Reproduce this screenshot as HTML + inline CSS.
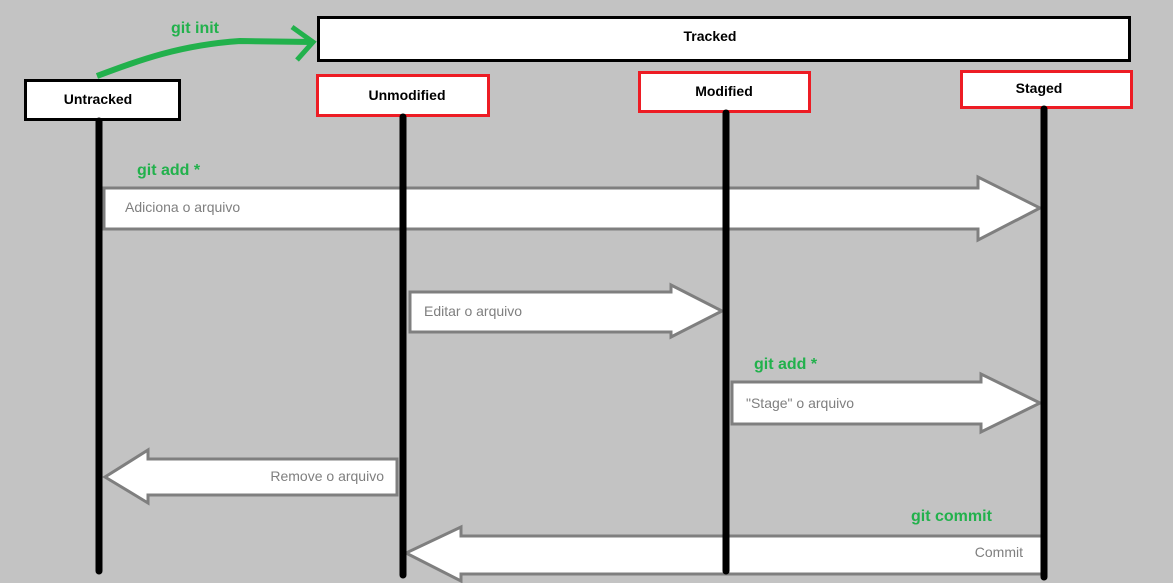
<!DOCTYPE html>
<html><head><meta charset="utf-8"><style>
html,body{margin:0;padding:0;background:#c3c3c3;width:1173px;height:583px;overflow:hidden}
svg{display:block}
.b{font-family:"Liberation Sans",sans-serif;font-weight:bold;font-size:14px;fill:#000}
.g{font-family:"Liberation Sans",sans-serif;font-weight:bold;font-size:16px;fill:#22b14c}
.t{font-family:"Liberation Sans",sans-serif;font-size:14px;fill:#7f7f7f}
</style></head><body>
<svg width="1173" height="583" viewBox="0 0 1173 583" xmlns="http://www.w3.org/2000/svg">
<rect width="1173" height="583" fill="#c3c3c3"/>
<!-- boxes -->
<rect x="318.5" y="17.5" width="811" height="43" fill="#fff" stroke="#000" stroke-width="3"/>
<text x="710" y="41" class="b" text-anchor="middle">Tracked</text>
<rect x="25.5" y="80.5" width="154" height="39" fill="#fff" stroke="#000" stroke-width="3"/>
<text x="98" y="104" class="b" text-anchor="middle">Untracked</text>
<rect x="317.5" y="75.5" width="171" height="40" fill="#fff" stroke="#ed1c24" stroke-width="3"/>
<text x="407" y="100" class="b" text-anchor="middle">Unmodified</text>
<rect x="639.5" y="72.5" width="170" height="39" fill="#fff" stroke="#ed1c24" stroke-width="3"/>
<text x="724" y="96" class="b" text-anchor="middle">Modified</text>
<rect x="961.5" y="71.5" width="170" height="36" fill="#fff" stroke="#ed1c24" stroke-width="3"/>
<text x="1039" y="93" class="b" text-anchor="middle">Staged</text>
<!-- git init arrow -->
<path d="M97 76 C140 60 180 45 240 41 L313 42" fill="none" stroke="#22b14c" stroke-width="6"/>
<path d="M292 27 L313 42 L297 60" fill="none" stroke="#22b14c" stroke-width="5"/>
<text x="171" y="33" class="g">git init</text>
<!-- arrows -->
<g fill="#fff" stroke="#7f7f7f" stroke-width="3" stroke-linejoin="miter">
<path d="M104 188 H978 V177 L1040 208 L978 240 V229 H104 Z"/>
<path d="M410 292 H671 V285 L722 311 L671 337 V332 H410 Z"/>
<path d="M732 382 H981 V374 L1040 403 L981 432 V424 H732 Z"/>
<path d="M397 459 H148 V450 L105 477 L148 503 V495 H397 Z"/>
<path d="M1042 536 H461 V527 L406 553 L461 581 V574 H1042 Z"/>
</g>
<text x="125" y="212" class="t">Adiciona o arquivo</text>
<text x="424" y="316" class="t">Editar o arquivo</text>
<text x="746" y="408" class="t">"Stage" o arquivo</text>
<text x="384" y="481" class="t" text-anchor="end">Remove o arquivo</text>
<text x="1023" y="557" class="t" text-anchor="end">Commit</text>
<text x="137" y="175" class="g">git add *</text>
<text x="754" y="369" class="g">git add *</text>
<text x="911" y="521" class="g">git commit</text>
<!-- lifelines -->
<g stroke="#000" stroke-width="7" stroke-linecap="round">
<line x1="99" y1="121" x2="99" y2="571"/>
<line x1="403" y1="117" x2="403" y2="575"/>
<line x1="726" y1="113" x2="726" y2="571"/>
<line x1="1044" y1="109" x2="1044" y2="577"/>
</g>
</svg>
</body></html>
